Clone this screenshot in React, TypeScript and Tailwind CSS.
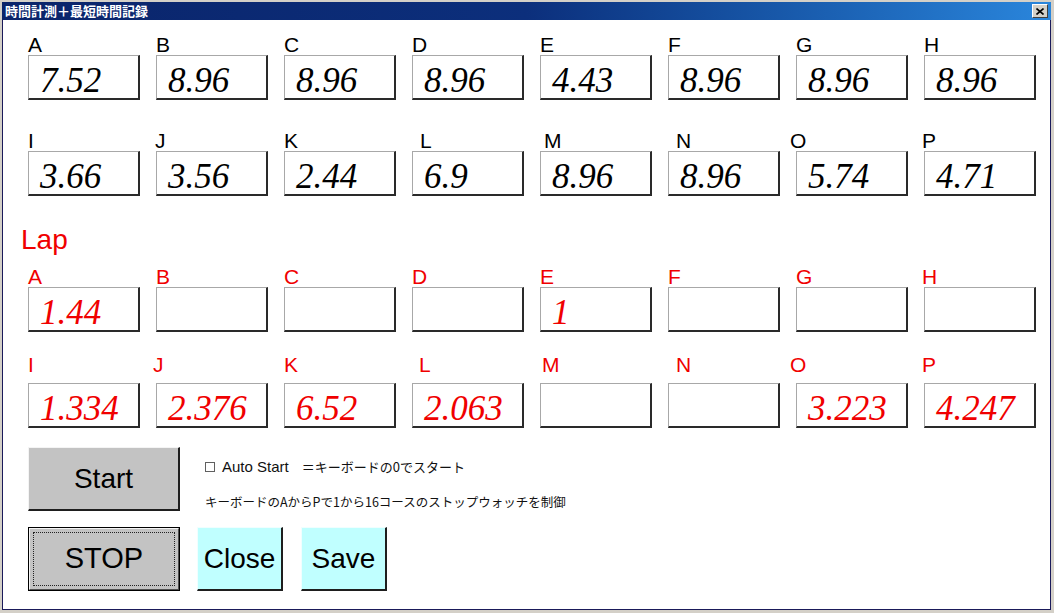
import React from "react";

type Cell = { k: string; v?: string; off?: string };

const timesTop: Cell[] = [
  { k: "A", v: "7.52" },
  { k: "B", v: "8.96" },
  { k: "C", v: "8.96" },
  { k: "D", v: "8.96" },
  { k: "E", v: "4.43" },
  { k: "F", v: "8.96" },
  { k: "G", v: "8.96" },
  { k: "H", v: "8.96" },
];

const timesBottom: Cell[] = [
  { k: "I", v: "3.66" },
  { k: "J", v: "3.56", off: "-ml-[1px]" },
  { k: "K", v: "2.44" },
  { k: "L", v: "6.9", off: "ml-[8px]" },
  { k: "M", v: "8.96", off: "ml-[4px]" },
  { k: "N", v: "8.96", off: "ml-[8px]" },
  { k: "O", v: "5.74", off: "-ml-[6px]" },
  { k: "P", v: "4.71", off: "-ml-[2px]" },
];

const lapTop: Cell[] = [
  { k: "A", v: "1.44" },
  { k: "B" },
  { k: "C" },
  { k: "D" },
  { k: "E", v: "1" },
  { k: "F" },
  { k: "G" },
  { k: "H", off: "-ml-[2px]" },
];

const lapBottom: Cell[] = [
  { k: "I", v: "1.334" },
  { k: "J", v: "2.376", off: "-ml-[3px]" },
  { k: "K", v: "6.52" },
  { k: "L", v: "2.063", off: "ml-[7px]" },
  { k: "M", off: "ml-[2px]" },
  { k: "N", off: "ml-[8px]" },
  { k: "O", v: "3.223", off: "-ml-[6px]" },
  { k: "P", v: "4.247", off: "-ml-[2px]" },
];

const sans = "font-['Liberation_Sans',Arial,sans-serif]";

function Field({ cell, red, tall }: { cell: Cell; red?: boolean; tall?: boolean }) {
  const color = red ? "text-[#f00000]" : "text-black";
  return (
    <div className="flex w-[112px] flex-col">
      <div className={`h-[20px] text-[21px] leading-[20px] ${sans} ${color} ${cell.off ?? ""}`}>{cell.k}</div>
      <div
        className={`${tall ? "mt-[8px]" : ""} box-border h-[45px] w-[112px] border-t border-l border-r-2 border-b-2 border-t-[#a8a8a8] border-l-[#a8a8a8] border-r-[#2a2a2a] border-b-[#2a2a2a] bg-white pl-[11px] pt-[7px] font-['Liberation_Serif','Times_New_Roman',serif] text-[35px] italic leading-[35px] ${color}`}
      >
        {cell.v ?? ""}
      </div>
    </div>
  );
}

function Row({ cells, red, tall }: { cells: Cell[]; red?: boolean; tall?: boolean }) {
  return (
    <div className="flex gap-[16px]">
      {cells.map((c) => (
        <Field key={c.k} cell={c} red={red} tall={tall} />
      ))}
    </div>
  );
}

export default function App() {
  return (
    <div className="box-border flex h-[613px] w-[1054px] flex-col bg-[#d4d0c8] pt-[2px] pr-[3px] pb-[3px] pl-[2px]">
      {/* title bar */}
      <div className="flex h-[18px] items-center justify-between bg-linear-to-r from-[#0a246a] via-[#0c2f7c] to-[#2a86dc] pl-[3px] pr-[3px]">
        <span className="font-['Noto_Sans_CJK_JP',sans-serif] text-[13px] font-bold leading-[18px] text-white">
          時間計測＋最短時間記録
        </span>
        <div className="box-border flex h-[14px] w-[16px] items-center justify-center border-t border-l border-r border-b border-t-white border-l-white border-r-[#404040] border-b-[#404040] bg-[#d4d0c8]">
          <svg width="8" height="7" viewBox="0 0 8 7">
            <path d="M0.5 0.5 L7.5 6.5 M7.5 0.5 L0.5 6.5" stroke="black" strokeWidth="1.6" fill="none" />
          </svg>
        </div>
      </div>

      {/* client area */}
      <div className="flex flex-1 flex-col border-r border-b border-l border-[#1a1a5a] bg-white pt-[15px] pl-[25px]">
        <Row cells={timesTop} />
        <div className="mt-[31px]">
          <Row cells={timesBottom} />
        </div>

        <div className={`mt-[30px] -ml-[7px] h-[28px] text-[28px] leading-[28px] text-[#f00000] ${sans}`}>Lap</div>

        <div className="mt-[13px]">
          <Row cells={lapTop} red />
        </div>
        <div className="mt-[23px]">
          <Row cells={lapBottom} red tall />
        </div>

        {/* controls */}
        <div className="mt-[19px] flex items-start">
          <button
            className={`box-border h-[64px] w-[152px] border-t border-l border-r-2 border-b-2 border-t-[#f4f4f4] border-l-[#f4f4f4] border-r-[#1e1e1e] border-b-[#1e1e1e] bg-[#c3c3c3] text-[28px] text-black ${sans}`}
          >
            Start
          </button>
          <div className="ml-[25px] pt-[11px]">
            <div className="flex h-[18px] items-center">
              <span className="box-border h-[10px] w-[10px] border border-[#606060] bg-white" />
              <span className={`ml-[7px] text-[15px] leading-[18px] text-[#111] ${sans}`}>Auto Start</span>
              <span className="ml-[13px] font-['Noto_Sans_CJK_JP',sans-serif] text-[13px] leading-[18px] text-[#111]">
                ＝キーボードの0でスタート
              </span>
            </div>
            <div className="mt-[17px] h-[18px] font-['Noto_Sans_CJK_JP',sans-serif] text-[12.5px] leading-[18px] text-[#111]">
              キーボードのAからPで1から16コースのストップウォッチを制御
            </div>
          </div>
        </div>

        <div className="mt-[16px] flex items-start">
          <div className="box-border h-[64px] w-[152px] border border-black">
            <div className="box-border flex h-full w-full border-t border-l border-r border-b border-t-[#f4f4f4] border-l-[#f4f4f4] border-r-[#505050] border-b-[#505050] bg-[#c3c3c3] p-[3px]">
              <div className={`flex flex-1 items-center justify-center border border-dotted border-[#222] text-[29px] text-black ${sans}`}>
                STOP
              </div>
            </div>
          </div>
          <button
            className={`ml-[17px] box-border h-[64px] w-[86px] border-t border-l border-r-2 border-b-2 border-t-[#f0ffff] border-l-[#f0ffff] border-r-[#1e1e1e] border-b-[#1e1e1e] bg-[#c0ffff] text-[28px] text-black ${sans}`}
          >
            Close
          </button>
          <button
            className={`ml-[18px] box-border h-[64px] w-[86px] border-t border-l border-r-2 border-b-2 border-t-[#f0ffff] border-l-[#f0ffff] border-r-[#1e1e1e] border-b-[#1e1e1e] bg-[#c0ffff] text-[28px] text-black ${sans}`}
          >
            Save
          </button>
        </div>
      </div>
    </div>
  );
}
